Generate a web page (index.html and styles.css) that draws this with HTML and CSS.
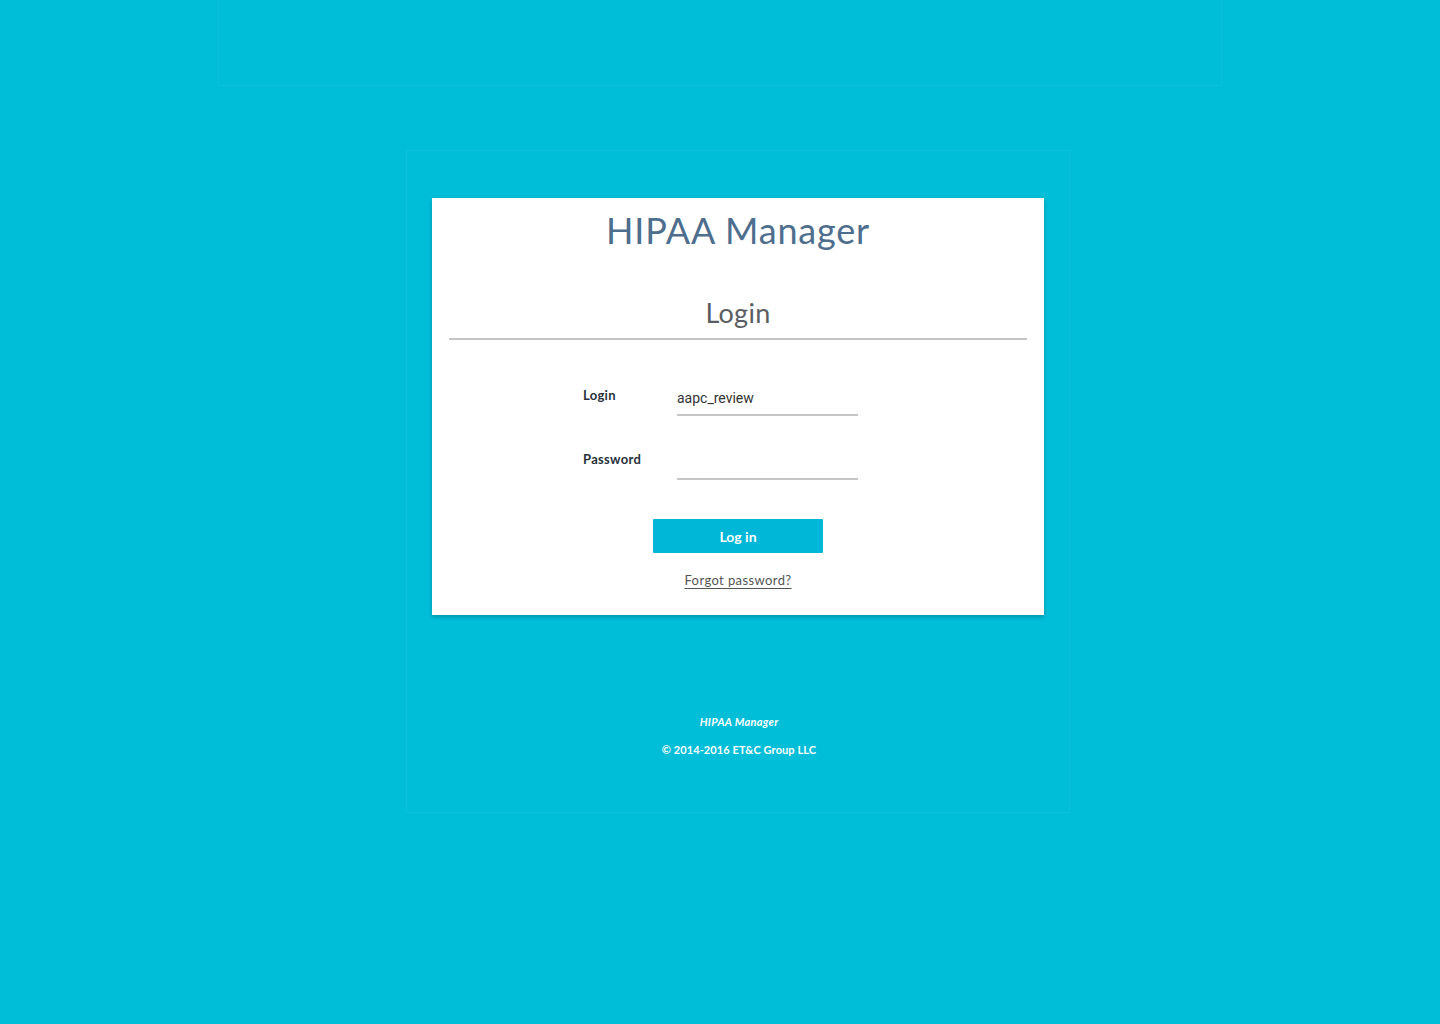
FILE: index.html
```html
<!DOCTYPE html>
<html>
<head>
<meta charset="utf-8">
<title>HIPAA Manager - Login</title>
<link rel="stylesheet" href="styles.css">
</head>
<body>
<div class="topbar"></div>
<div class="frame">
  <div class="card">
    <h1 class="brand">HIPAA Manager</h1>
    <h2 class="heading">Login</h2>
    <div class="divider"></div>
    <form class="form">
      <div class="row">
        <label class="label">Login</label>
        <div class="field"><span class="value">aapc_review</span></div>
      </div>
      <div class="row">
        <label class="label">Password</label>
        <div class="field"></div>
      </div>
      <div class="actions">
        <button type="button" class="btn">Log in</button>
        <a class="forgot" href="#">Forgot password?</a>
      </div>
    </form>
  </div>
  <div class="footer">
    <div class="foot-brand">HIPAA Manager</div>
    <div class="foot-copy">© 2014-2016 ET&amp;C Group LLC</div>
  </div>
</div>
</body>
</html>
```
FILE: styles.css
```css
html, body {
  margin: 0;
  padding: 0;
}
body {
  background: #00bdd8;
  width: 1440px;
  height: 1024px;
  overflow: hidden;
  font-family: "Lato", "Open Sans", sans-serif;
}
.topbar {
  width: 1004px;
  height: 86px;
  margin: 0 0 0 218px;
  box-sizing: border-box;
  border: 1px solid rgba(255, 255, 255, 0.06);
  border-top: none;
}
.frame {
  width: 664px;
  height: 663px;
  margin: 64px 0 0 406px;
  box-sizing: border-box;
  border: 1px solid rgba(255, 255, 255, 0.06);
  padding: 47px 0 0 25px;
}
.card {
  width: 612px;
  height: 417px;
  background: #fff;
  box-shadow: 0 2px 4px rgba(0, 0, 0, 0.22);
  box-sizing: border-box;
  padding-top: 10px;
}
.brand {
  margin: 0;
  text-align: center;
  font-family: "Lato", sans-serif;
  font-weight: 400;
  font-size: 36px;
  line-height: 44px;
  color: #4e6e8e;
  letter-spacing: 0.8px;
}
.heading {
  margin: 45px 0 0;
  text-align: center;
  font-family: "Lato", sans-serif;
  font-weight: 400;
  font-size: 27px;
  line-height: 32px;
  color: #5a5e63;
  letter-spacing: 0.3px;
}
.divider {
  margin: 9px 17px 0;
  height: 2px;
  background: #c4c4c4;
}
.form {
  margin: 0;
  padding-top: 40px;
}
.row {
  display: flex;
  align-items: flex-start;
  margin-left: 151px;
  height: 64px;
}
.label {
  width: 94px;
  font-family: "Lato", sans-serif;
  font-weight: 700;
  font-size: 13px;
  letter-spacing: 0.3px;
  color: #27313c;
  line-height: 16px;
  padding-top: 7px;
}
.field {
  width: 181px;
  height: 36px;
  box-sizing: border-box;
  border-bottom: 2px solid #c6c6c6;
  padding-top: 7px;
}
.value {
  font-family: "Roboto", sans-serif;
  font-size: 14px;
  color: #333;
}
.actions {
  display: flex;
  flex-direction: column;
  align-items: center;
  padding-top: 11px;
}
.btn {
  width: 170px;
  height: 34px;
  border: none;
  border-radius: 1px;
  background: #00b7d7;
  color: #fff;
  font-family: "Lato", sans-serif;
  font-weight: 700;
  font-size: 14px;
  cursor: pointer;
}
.forgot {
  margin-top: 19px;
  font-family: "Lato", sans-serif;
  font-size: 13px;
  letter-spacing: 0.4px;
  color: #555;
  text-decoration: underline;
  text-decoration-thickness: 1px;
  text-underline-offset: 3px;
}
.footer {
  text-align: center;
  color: #fff;
  font-family: "Lato", sans-serif;
  padding-top: 100px;
  padding-left: 1px;
  width: 612px;
}
.foot-brand {
  font-style: italic;
  font-weight: 700;
  font-size: 11px;
  line-height: 14px;
  letter-spacing: 0.3px;
}
.foot-copy {
  margin-top: 14px;
  font-size: 11px;
  font-weight: 700;
  line-height: 14px;
  letter-spacing: 0.1px;
}
```
